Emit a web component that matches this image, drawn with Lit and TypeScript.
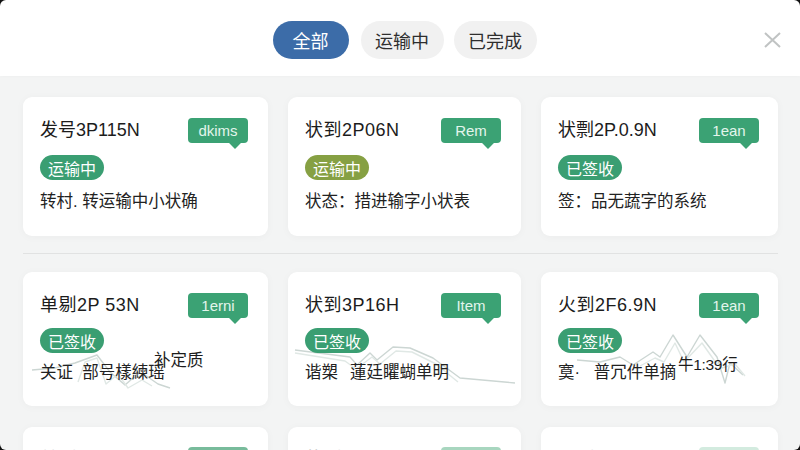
import { LitElement, html, css, svg } from "lit";
import { customElement } from "lit/decorators.js";

interface Card {
  title: string; tag: string; status: string; tone: string; desc: string;
  extra?: string; extraClass?: string; chart?: { box: string; lines: string[] };
}

const cards: Card[] = [
  { title: "发号3P115N", tag: "dkims", status: "运输中", tone: "", desc: "转村. 转运输中小状确" },
  { title: "状到2P06N", tag: "Rem", status: "运输中", tone: "olive", desc: "状态：措进输字小状表" },
  { title: "状剽2P.0.9N", tag: "1ean", status: "已签收", tone: "", desc: "签：品无蔬字的系统" },
  {
    title: "单剔2P 53N", tag: "1erni", status: "已签收", tone: "", desc: "关证  部号樣練瑶", extra: "补定质", extraClass: "e-left",
    chart: { box: "23 272 245 134", lines: [
      "M32 370 L55 368 L75 363 L97 355 L110 372 L125 385 L133 378 L145 375 L158 384 L170 388",
      "M78 382 L85 362 L97 358 L106 384 L118 374 L128 388 L142 380 L152 386",
    ] },
  },
  {
    title: "状到3P16H", tag: "Item", status: "已签收", tone: "", desc: "谐槊  \u2006蓮廷䂂蝴单明",
    chart: { box: "288 272 233 134", lines: [
      "M295 350 L350 357 L357 365 L370 353 L377 360 L393 347 L410 348 L433 358 L460 378 L515 383",
      "M295 353 L345 361 L356 369 L372 357 L380 364 L396 351 L412 352 L436 364 L458 382",
    ] },
  },
  {
    title: "火到2F6.9N", tag: "1ean", status: "已签收", tone: "", desc: "寞·   普冗件单摘", extra: "牛1:39行", extraClass: "e-right",
    chart: { box: "541 272 237 134", lines: [
      "M577 360 L600 362 L620 357 L633 365 L653 352 L660 357 L673 335 L687 357 L700 335 L717 357 L725 383 L730 363 L743 375",
      "M640 366 L655 358 L664 362 L675 343 L684 362 L702 343 L714 360 L722 368 L735 364 L745 376",
    ] },
  },
];

const ghosts = [
  { title: "单到2P 53N", tone: "g1" },
  { title: "状到3P16H", tone: "g2" },
  { title: "火到2F6.9N", tone: "g3" },
];

@customElement("app-root")
export class AppRoot extends LitElement {
  static styles = css`
    :host { display: block; width: 800px; height: 450px; overflow: hidden; position: relative; background: #f3f4f4;
      font-family: "Liberation Sans", "Noto Sans CJK SC", sans-serif; color: #1c1c1c; }
    .head { height: 76px; background: #fff; display: flex; justify-content: center; align-items: center;
      position: relative; padding: 4px 0 0 9px; box-sizing: border-box; box-shadow: 0 1px 3px rgba(0,0,0,.02); }
    .pill { height: 38px; border-radius: 19px; background: #f1f1f1; padding: 0 14.5px; display: flex; align-items: center;
      font-size: 18px; color: #2e2e2e; margin-left: 10px; }
    .pill.on { background: #3c6ca8; color: #fff; padding: 0 20px; margin-left: 0; margin-right: 2px; }
    .close { position: absolute; right: 19px; top: 32px; width: 17px; height: 16px; }
    .grid { display: grid; grid-template-columns: 245px 233px 237px; column-gap: 20px; padding: 21px 22px 0 23px; }
    .card { background: #fff; border-radius: 9px; height: 139px; box-sizing: border-box; position: relative;
      padding: 21px 20px 0 17px; box-shadow: 0 1px 8px rgba(0,0,0,.035); }
    .card.col3 { padding-right: 19px; }
    .row2 { height: 134px; }
    .top { display: flex; justify-content: space-between; align-items: flex-start; height: 30px; position: relative; z-index: 1; }
    .title { font-size: 18px; line-height: 24px; color: #1c1c1c; letter-spacing: .5px; white-space: nowrap; }
    .card.tight .title { letter-spacing: 0; }
    .tag { width: 60px; height: 25px; background: #3ba274; border-radius: 4px; color: #e3f5ec; font-size: 15px;
      display: flex; align-items: center; justify-content: center; position: relative; }
    .tag::after { content: ""; position: absolute; right: 7px; bottom: -6px; width: 12px; height: 12px; background: inherit;
      transform: rotate(45deg) scale(.7); z-index: -1; }
    .status { display: flex; width: fit-content; height: 25px; padding: 0 8px; border-radius: 13px; align-items: center; font-size: 16px;
      color: #fff; background: #3a9e72; margin-top: 7px; position: relative; z-index: 1; }
    .row2 .status { margin-top: 5px; }
    .status.olive { background: #86a043; }
    .desc { font-size: 16.5px; line-height: 24px; margin-top: 9px; color: #222; white-space: pre; position: relative; z-index: 1; }
    .row2 .desc { margin-top: 7px; }
    .extra { position: absolute; color: #1c1c1c; line-height: 20px; z-index: 1; white-space: nowrap; }
    .e-left { left: 131px; top: 78px; font-size: 16.5px; }
    .e-right { left: 137px; top: 83px; font-size: 15.5px; letter-spacing: -.3px; }
    .chart { position: absolute; left: 0; top: 0; width: 100%; height: 100%; }
    .sep { grid-column: 1 / -1; height: 1px; background: #e1e2e2; margin: 17px 0 18px; }
    .ghost { height: 80px; margin-top: 21px; padding-top: 20px; }
    .ghost .title { color: #c4c6c6; }
    .ghost .g1 { background: #78bb9b; }
    .ghost .g2 { background: #a8d6bf; }
    .ghost .g3 { background: #d3ebdf; }
    .frame { position: absolute; inset: 0; border-radius: 6px; box-shadow: 0 0 0 8px #111; pointer-events: none; z-index: 3; }
  `;

  private renderCard(c: Card, i: number) {
    return html`<div class="card ${i > 2 ? "row2" : ""} ${i === 0 || i === 2 ? "tight" : ""} ${i % 3 === 2 ? "col3" : ""}">
      ${c.chart ? html`<svg class="chart" viewBox=${c.chart.box} fill="none">
        ${c.chart.lines.map((d, n) => svg`<path d=${d} stroke=${n ? "#e0e8e5" : "#ccd6d3"} stroke-width="1.4" stroke-linejoin="round" />`)}
      </svg>` : ""}
      <div class="top"><div class="title">${c.title}</div><div class="tag">${c.tag}</div></div>
      <div class="status ${c.tone}">${c.status}</div>
      <div class="desc">${c.desc}</div>
      ${c.extra ? html`<div class="extra ${c.extraClass}">${c.extra}</div>` : ""}
    </div>`;
  }

  render() {
    return html`
      <div class="head">
        <div class="pill on">全部</div><div class="pill">运输中</div><div class="pill">已完成</div>
        <svg class="close" viewBox="0 0 17 16" fill="none"><path d="M1 1 L16 15 M16 1 L1 15" stroke="#c0c3c3" stroke-width="2"/></svg>
      </div>
      <div class="grid">
        ${cards.slice(0, 3).map((c, i) => this.renderCard(c, i))}
        <div class="sep"></div>
        ${cards.slice(3).map((c, i) => this.renderCard(c, i + 3))}
        ${ghosts.map((g, i) => html`<div class="card ghost ${i === 2 ? "col3" : ""}"><div class="top"><div class="title">${g.title}</div><div class="tag ${g.tone}"></div></div></div>`)}
      </div>
      <div class="frame"></div>`;
  }
}
